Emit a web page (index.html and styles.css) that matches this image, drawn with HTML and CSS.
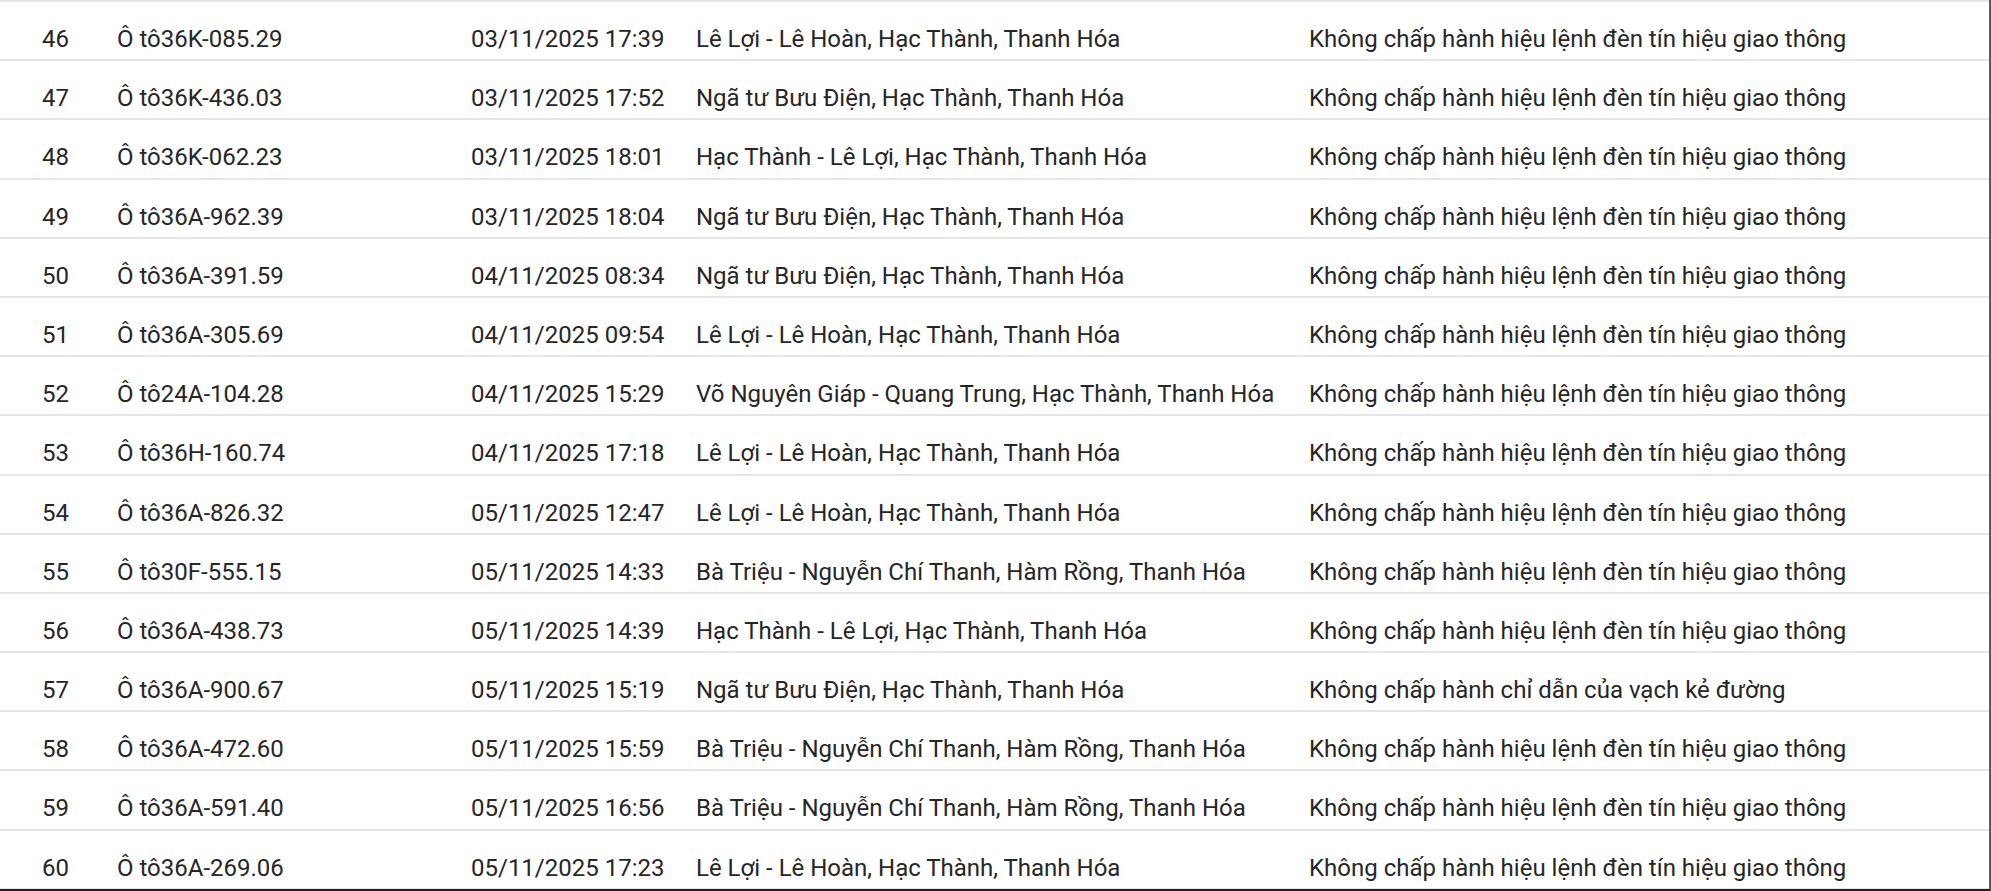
FILE: index.html
```html
<!DOCTYPE html>
<html lang="vi">
<head>
<meta charset="utf-8">
<title>Danh sách vi phạm</title>
<link rel="stylesheet" href="styles.css">
</head>
<body>
<div class="frame">
  <div class="table">
    <div class="row"><div class="c no">46</div><div class="c plate">Ô tô36K-085.29</div><div class="c time">03/11/2025 17:39</div><div class="c place">Lê Lợi - Lê Hoàn, Hạc Thành, Thanh Hóa</div><div class="c act">Không chấp hành hiệu lệnh đèn tín hiệu giao thông</div></div>
    <div class="row"><div class="c no">47</div><div class="c plate">Ô tô36K-436.03</div><div class="c time">03/11/2025 17:52</div><div class="c place">Ngã tư Bưu Điện, Hạc Thành, Thanh Hóa</div><div class="c act">Không chấp hành hiệu lệnh đèn tín hiệu giao thông</div></div>
    <div class="row"><div class="c no">48</div><div class="c plate">Ô tô36K-062.23</div><div class="c time">03/11/2025 18:01</div><div class="c place">Hạc Thành - Lê Lợi, Hạc Thành, Thanh Hóa</div><div class="c act">Không chấp hành hiệu lệnh đèn tín hiệu giao thông</div></div>
    <div class="row"><div class="c no">49</div><div class="c plate">Ô tô36A-962.39</div><div class="c time">03/11/2025 18:04</div><div class="c place">Ngã tư Bưu Điện, Hạc Thành, Thanh Hóa</div><div class="c act">Không chấp hành hiệu lệnh đèn tín hiệu giao thông</div></div>
    <div class="row"><div class="c no">50</div><div class="c plate">Ô tô36A-391.59</div><div class="c time">04/11/2025 08:34</div><div class="c place">Ngã tư Bưu Điện, Hạc Thành, Thanh Hóa</div><div class="c act">Không chấp hành hiệu lệnh đèn tín hiệu giao thông</div></div>
    <div class="row"><div class="c no">51</div><div class="c plate">Ô tô36A-305.69</div><div class="c time">04/11/2025 09:54</div><div class="c place">Lê Lợi - Lê Hoàn, Hạc Thành, Thanh Hóa</div><div class="c act">Không chấp hành hiệu lệnh đèn tín hiệu giao thông</div></div>
    <div class="row"><div class="c no">52</div><div class="c plate">Ô tô24A-104.28</div><div class="c time">04/11/2025 15:29</div><div class="c place">Võ Nguyên Giáp - Quang Trung, Hạc Thành, Thanh Hóa</div><div class="c act">Không chấp hành hiệu lệnh đèn tín hiệu giao thông</div></div>
    <div class="row"><div class="c no">53</div><div class="c plate">Ô tô36H-160.74</div><div class="c time">04/11/2025 17:18</div><div class="c place">Lê Lợi - Lê Hoàn, Hạc Thành, Thanh Hóa</div><div class="c act">Không chấp hành hiệu lệnh đèn tín hiệu giao thông</div></div>
    <div class="row"><div class="c no">54</div><div class="c plate">Ô tô36A-826.32</div><div class="c time">05/11/2025 12:47</div><div class="c place">Lê Lợi - Lê Hoàn, Hạc Thành, Thanh Hóa</div><div class="c act">Không chấp hành hiệu lệnh đèn tín hiệu giao thông</div></div>
    <div class="row"><div class="c no">55</div><div class="c plate">Ô tô30F-555.15</div><div class="c time">05/11/2025 14:33</div><div class="c place">Bà Triệu - Nguyễn Chí Thanh, Hàm Rồng, Thanh Hóa</div><div class="c act">Không chấp hành hiệu lệnh đèn tín hiệu giao thông</div></div>
    <div class="row"><div class="c no">56</div><div class="c plate">Ô tô36A-438.73</div><div class="c time">05/11/2025 14:39</div><div class="c place">Hạc Thành - Lê Lợi, Hạc Thành, Thanh Hóa</div><div class="c act">Không chấp hành hiệu lệnh đèn tín hiệu giao thông</div></div>
    <div class="row"><div class="c no">57</div><div class="c plate">Ô tô36A-900.67</div><div class="c time">05/11/2025 15:19</div><div class="c place">Ngã tư Bưu Điện, Hạc Thành, Thanh Hóa</div><div class="c act">Không chấp hành chỉ dẫn của vạch kẻ đường</div></div>
    <div class="row"><div class="c no">58</div><div class="c plate">Ô tô36A-472.60</div><div class="c time">05/11/2025 15:59</div><div class="c place">Bà Triệu - Nguyễn Chí Thanh, Hàm Rồng, Thanh Hóa</div><div class="c act">Không chấp hành hiệu lệnh đèn tín hiệu giao thông</div></div>
    <div class="row"><div class="c no">59</div><div class="c plate">Ô tô36A-591.40</div><div class="c time">05/11/2025 16:56</div><div class="c place">Bà Triệu - Nguyễn Chí Thanh, Hàm Rồng, Thanh Hóa</div><div class="c act">Không chấp hành hiệu lệnh đèn tín hiệu giao thông</div></div>
    <div class="row"><div class="c no">60</div><div class="c plate">Ô tô36A-269.06</div><div class="c time">05/11/2025 17:23</div><div class="c place">Lê Lợi - Lê Hoàn, Hạc Thành, Thanh Hóa</div><div class="c act">Không chấp hành hiệu lệnh đèn tín hiệu giao thông</div></div>
  </div>
</div>
</body>
</html>
```

FILE: styles.css
```css
html, body {
  margin: 0;
  padding: 0;
  background: #ffffff;
}

body {
  font-family: Roboto, "Noto Sans", "Liberation Sans", sans-serif;
  font-size: 24px;
  color: #262626;
  overflow: hidden;
}

.frame {
  width: 1991px;
  height: 891px;
  box-sizing: border-box;
  border-right: 2px solid #5a5a5a;
  border-bottom: 2px solid #1e1e1e;
  overflow: hidden;
}

.table {
  border-top: 2px solid #e6e6e6;
}

.row {
  display: grid;
  grid-template-columns: 117px 354px 225px 613px 1fr;
  height: 59.2px;
  box-sizing: border-box;
  border-bottom: 2px solid #e6e6e6;
  padding-top: 23px;
}

.c {
  line-height: 28px;
  white-space: nowrap;
}

.no {
  padding-left: 42px;
}
```
